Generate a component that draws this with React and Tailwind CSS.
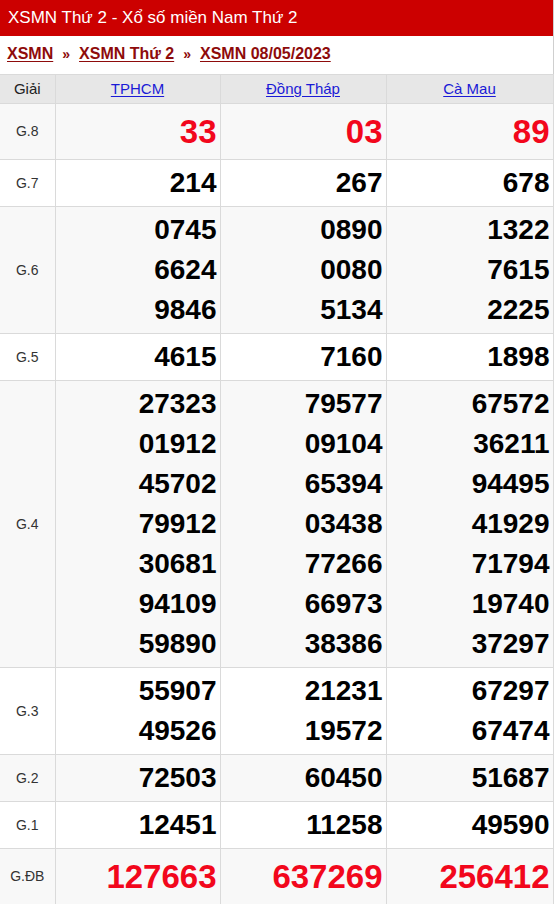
import React from "react";

const provinces = ["TPHCM", "Đồng Tháp", "Cà Mau"];

const rows = [
  { name: "G.8", red: true, nums: [["33"], ["03"], ["89"]] },
  { name: "G.7", nums: [["214"], ["267"], ["678"]] },
  {
    name: "G.6",
    nums: [
      ["0745", "6624", "9846"],
      ["0890", "0080", "5134"],
      ["1322", "7615", "2225"],
    ],
  },
  { name: "G.5", nums: [["4615"], ["7160"], ["1898"]] },
  {
    name: "G.4",
    nums: [
      ["27323", "01912", "45702", "79912", "30681", "94109", "59890"],
      ["79577", "09104", "65394", "03438", "77266", "66973", "38386"],
      ["67572", "36211", "94495", "41929", "71794", "19740", "37297"],
    ],
  },
  {
    name: "G.3",
    nums: [
      ["55907", "49526"],
      ["21231", "19572"],
      ["67297", "67474"],
    ],
  },
  { name: "G.2", nums: [["72503"], ["60450"], ["51687"]] },
  { name: "G.1", nums: [["12451"], ["11258"], ["49590"]] },
  { name: "G.ĐB", red: true, nums: [["127663"], ["637269"], ["256412"]] },
];

export default function App() {
  return (
    <div
      className="w-[554px] bg-white border-r border-[#cfcfcf]"
      style={{ fontFamily: '"Liberation Sans", Arial, sans-serif' }}
    >
      {/* tiêu đề */}
      <div className="h-[36px] bg-[#cc0000] text-white text-[17px] leading-[36px] pl-[8px]">
        XSMN Thứ 2 - Xổ số miền Nam Thứ 2
      </div>

      {/* breadcrumb */}
      <div className="h-[38px] flex items-center pl-[7px] text-[16px] font-bold text-[#8e0b0b] pb-[2px]">
        <a href="#" className="underline underline-offset-2">XSMN</a>
        <span className="mx-[9px] text-[14px] text-[#8e0b0b]">»</span>
        <a href="#" className="underline underline-offset-2">XSMN Thứ 2</a>
        <span className="mx-[9px] text-[14px] text-[#8e0b0b]">»</span>
        <a href="#" className="underline underline-offset-2">XSMN 08/05/2023</a>
      </div>

      <table className="w-[553px] table-fixed border-collapse">
        <colgroup>
          <col className="w-[55px]" />
          <col className="w-[165px]" />
          <col className="w-[166px]" />
          <col className="w-[167px]" />
        </colgroup>
        <thead>
          <tr className="h-[29px] bg-[#e7e7e7]">
            <th className="border border-[#dadada] border-l-0 text-[15px] font-normal text-[#222] text-center">
              Giải
            </th>
            {provinces.map((p) => (
              <th
                key={p}
                className="border border-[#dadada] text-[15px] font-normal text-center"
              >
                <a href="#" className="text-[#1a1ad6] underline underline-offset-2">
                  {p}
                </a>
              </th>
            ))}
          </tr>
        </thead>
        <tbody>
          {rows.map((r, i) => (
            <tr key={r.name} className={i % 2 === 0 ? "bg-[#f8f8f8]" : "bg-white"}>
              <td className="border border-[#dadada] border-l-0 text-center align-middle text-[14px] text-[#333]">
                {r.name}
              </td>
              {r.nums.map((col, j) => (
                <td
                  key={j}
                  className="border border-[#dadada] text-right align-middle py-[3px] pr-[3px]"
                >
                  {col.map((n) => (
                    <div
                      key={n}
                      className={
                        r.red
                          ? "text-[33px] leading-[49px] font-bold text-[#f2071c]"
                          : "text-[28px] leading-[40px] font-bold text-black"
                      }
                    >
                      {n}
                    </div>
                  ))}
                </td>
              ))}
            </tr>
          ))}
        </tbody>
      </table>
    </div>
  );
}
